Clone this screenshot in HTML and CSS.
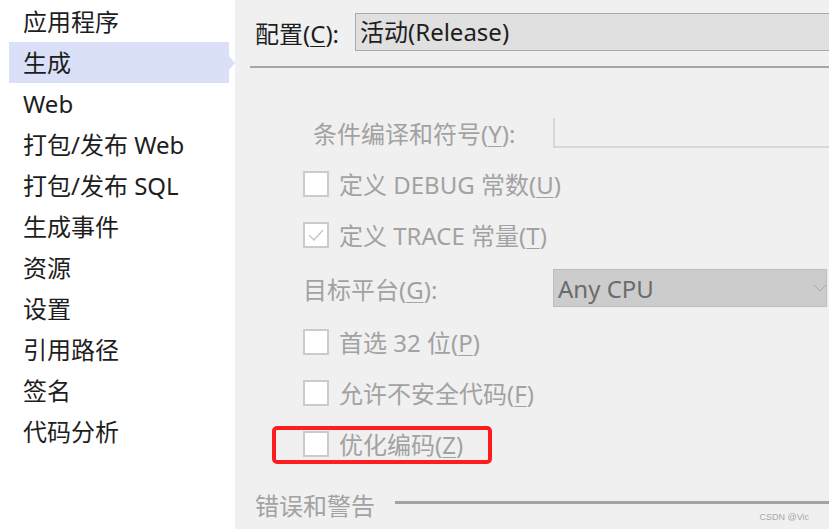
FILE: index.html
```html
<!DOCTYPE html>
<html lang="zh-CN">
<head>
    <meta charset="UTF-8">
    <meta name="viewport" content="width=device-width, initial-scale=1.0">
    <title>项目属性 - 生成</title>
    <link rel="stylesheet" href="styles.css">
</head>
<body>
    <ul class="nav">
        <li>应用程序</li>
        <li class="active">生成</li>
        <li>Web</li>
        <li>打包/发布 Web</li>
        <li>打包/发布 SQL</li>
        <li>生成事件</li>
        <li>资源</li>
        <li>设置</li>
        <li>引用路径</li>
        <li>签名</li>
        <li>代码分析</li>
    </ul>

    <main class="panel">
        <div class="config-row">
            <span class="config-label">配置(<u>C</u>):</span>
            <div class="config-select">活动(Release)</div>
        </div>
        <div class="rule"></div>

        <div class="options">
            <div class="row symbols">
                <span class="label">条件编译和符号(<u>Y</u>):</span>
                <div class="textbox"></div>
            </div>
            <div class="row">
                <span class="check"></span>
                <span class="label">定义 DEBUG 常数(<u>U</u>)</span>
            </div>
            <div class="row">
                <span class="check">
                    <svg width="22" height="22" viewBox="0 0 22 22"><polyline points="4,11 9,16 18,6" fill="none" stroke="#c4c4c4" stroke-width="1.4"/></svg>
                </span>
                <span class="label">定义 TRACE 常量(<u>T</u>)</span>
            </div>
            <div class="row platform">
                <span class="label">目标平台(<u>G</u>):</span>
                <div class="dropdown">
                    <span>Any CPU</span>
                    <svg class="chevron" width="14" height="8" viewBox="0 0 14 8"><polyline points="1,1 7,7 13,1" fill="none" stroke="#a8a8a8" stroke-width="1"/></svg>
                </div>
            </div>
            <div class="row">
                <span class="check"></span>
                <span class="label">首选 32 位(<u>P</u>)</span>
            </div>
            <div class="row">
                <span class="check"></span>
                <span class="label">允许不安全代码(<u>F</u>)</span>
            </div>
            <div class="row marked">
                <span class="check"></span>
                <span class="label">优化编码(<u>Z</u>)</span>
                <div class="highlight"></div>
            </div>
        </div>

        <div class="section">
            <span class="section-title">错误和警告</span>
            <div class="section-line"></div>
        </div>
        <div class="watermark">CSDN @Vic</div>
    </main>
</body>
</html>
```

FILE: styles.css
```css
body {
    margin: 0;
    display: flex;
    height: 529px;
    overflow: hidden;
    font-family: "Noto Sans", "Noto Sans CJK SC", sans-serif;
    font-size: 24px;
    color: #1e1e1e;
    background: #fff;
}

u {
    text-decoration-thickness: 1px;
    text-underline-offset: 3px;
}

/* left navigation */
.nav {
    list-style: none;
    margin: 0;
    padding: 1px 0 0 9px;
    width: 226px;
    flex-shrink: 0;
}
.nav li {
    position: relative;
    height: 41px;
    line-height: 41px;
    padding-left: 14px;
    width: 206px;
    white-space: nowrap;
}
.nav li.active {
    background: #d9e0f8;
}
.nav li.active::after {
    content: "";
    position: absolute;
    right: -6px;
    top: 14px;
    border-top: 7px solid transparent;
    border-bottom: 7px solid transparent;
    border-left: 6px solid #d9e0f8;
}

/* right panel */
.panel {
    position: relative;
    flex: 1;
    background: #f0f0f0;
    overflow: hidden;
}

.config-row {
    display: flex;
    align-items: center;
    padding: 13px 0 0 20px;
    height: 38px;
}
.config-label {
    flex-shrink: 0;
    width: 100px;
    white-space: nowrap;
}
.config-select {
    flex-shrink: 0;
    width: 520px;
    height: 36px;
    line-height: 36px;
    padding-left: 4px;
    background: #e0e0e0;
    border: 1px solid #a9a9a9;
    white-space: nowrap;
}

.rule {
    margin: 15px 0 0 15px;
    height: 2px;
    background: #a6a6a6;
}

.options {
    margin-top: 39px;
    padding-left: 68px;
    color: #a2a2a2;
}
.row {
    position: relative;
    display: flex;
    align-items: center;
    height: 51px;
    white-space: nowrap;
}
.row .label {
    flex-shrink: 0;
}
.row.symbols .label {
    width: 240px;
    padding-left: 10px;
}
.textbox {
    flex-shrink: 0;
    width: 400px;
    height: 28px;
    border-left: 2px solid #d6d6d6;
    border-bottom: 2px solid #d6d6d6;
}
.check {
    flex-shrink: 0;
    width: 22px;
    height: 22px;
    margin-right: 10px;
    background: #fff;
    border: 2px solid #cbcbcb;
}
.check svg {
    display: block;
}

.row.platform {
    height: 56px;
}
.row.platform .label {
    width: 250px;
}
.dropdown {
    flex-shrink: 0;
    display: flex;
    align-items: center;
    justify-content: space-between;
    width: 268px;
    height: 36px;
    padding-left: 4px;
    background: #cccccc;
    border: 1px solid #bdbdbd;
    color: #6b6b6b;
}
.chevron {
    margin-right: -1px;
}

/* red annotation box drawn over the screenshot */
.highlight {
    position: absolute;
    left: -31px;
    top: 8px;
    width: 212px;
    height: 30px;
    border: 4px solid #ff1c1c;
    border-radius: 5px;
}

.section {
    display: flex;
    align-items: center;
    margin-top: 18px;
    padding-left: 20px;
    color: #a2a2a2;
}
.section-title {
    white-space: nowrap;
}
.section-line {
    flex: 1;
    height: 3px;
    margin: 0 0 4px 20px;
    background: #a3a3a3;
}

.watermark {
    position: absolute;
    right: 20px;
    bottom: 7px;
    font-family: "Liberation Sans", sans-serif;
    font-size: 9px;
    color: #a8a8a8;
}
```
